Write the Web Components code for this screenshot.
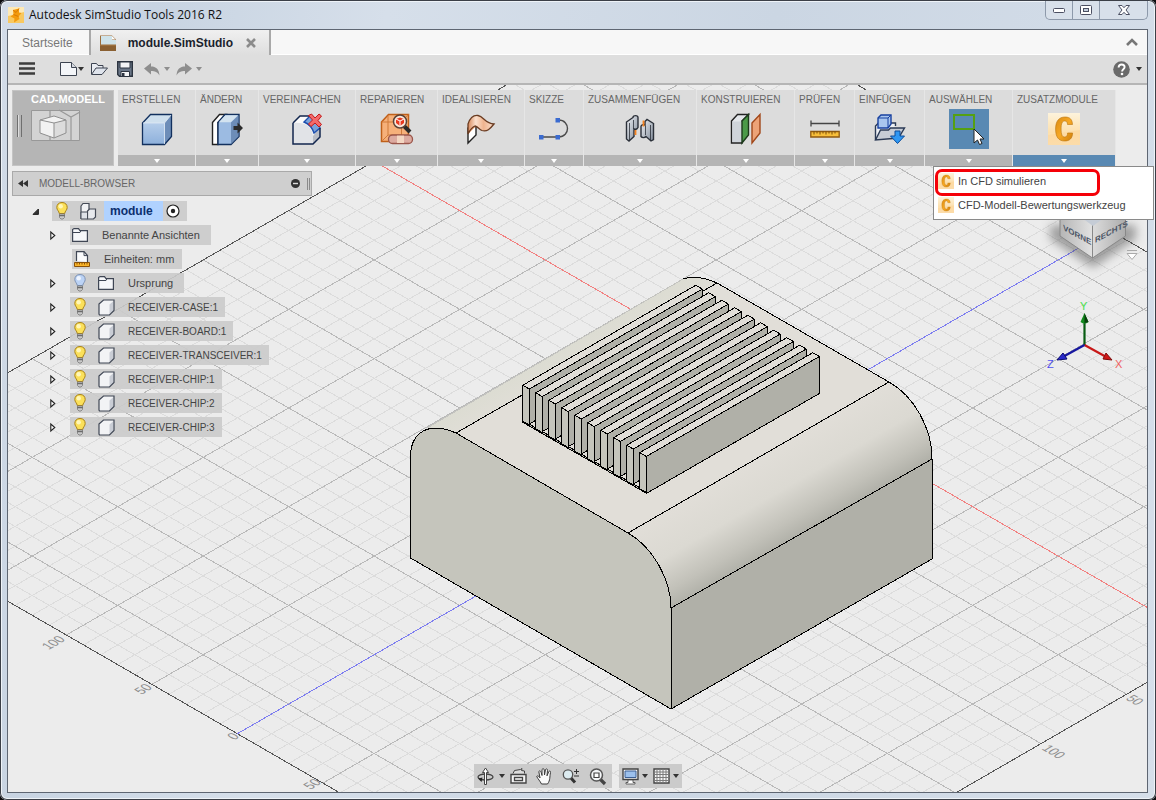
<!DOCTYPE html>
<html lang="de">
<head>
<meta charset="utf-8">
<title>Autodesk SimStudio Tools 2016 R2</title>
<style>
  html, body { margin: 0; background: #0b0b0d; }
  body { font: 11px/14px "Liberation Sans", Arial, sans-serif; color: #444; }
</style>
</head>
<body>
<app-window></app-window>
<script>
const cGlyph = `<defs><linearGradient id="bg" x2="0" y2="1"><stop offset="0" stop-color="#fdf3dc"/><stop offset=".6" stop-color="#fde0ad"/><stop offset="1" stop-color="#fbe6c2"/></linearGradient><linearGradient id="c" x2="1" y2="1"><stop offset="0" stop-color="#d98a12"/><stop offset=".5" stop-color="#f7a823"/><stop offset="1" stop-color="#d07f0c"/></linearGradient></defs><path d="M0 0h32v32H0z" fill="url(#bg)"/><path d="M0 22l32-5v15H0z" fill="#fdd59a" opacity=".6"/><path d="M24.500 11.500h-5c0-2.500-1-3.500-2.800-3.500-2.500 0-3.600 2.500-3.600 8s1 8 3.500 8c2 0 3-1.200 3-4h5c-.2 5.500-3 8-8 8-6 0-9-4-9-12S11 4 17 4c5 0 7.300 2.500 7.500 7.500z" fill="url(#c)" stroke="#b8740f" stroke-width=".6"/>`;
const bulb = (a, b, s) => `<path d="M10 1.500c3.400 0 5.200 2.200 5.200 5 0 2.500-2.200 3.600-2.500 6h-5.400C7 10.100 4.800 9 4.800 6.500 4.800 3.700 6.600 1.500 10 1.500z" fill="${a}" stroke="${s}"/><circle cx="8.700" cy="5.200" r="2.200" fill="${b}"/><path d="M7.500 13h5v3.500l-1.500 1.500h-2l-1.500-1.500z" fill="#c9c9c9" stroke="#777" stroke-width=".8"/><path d="M7.500 14.700h5" stroke="#555"/>`;

/* name: [width, height, markup] */
const ICONS = {
  app: [16, 16, `<rect width="16" height="16" fill="#fde9b6"/><path d="M0 9l16-4v11H0z" fill="#f8c860"/><path d="M5 3l6-1.500v4l2.500.5-3 3.500 1 2.500L6 15.500l.5-4-4-2 3-2z" fill="#f39a0c"/><path d="M5 3l3 2.500 3-4M5.500 7.500l5 2" stroke="#d97a06" fill="none"/>`],
  doc: [16, 16, `<path d="M0 .5h12l4 4V16H0z" fill="#9d6f3d"/><path d="M0 11h16v5H0z" fill="#8a6032"/><path d="M1 1h11v4h4v4.500H1z" fill="#cfe3ea"/><path d="M12 1v3.500h3.500z" fill="#fff"/>`],
  close: [12, 12, `<path d="M2 2l8 8M10 2l-8 8" stroke="#8b8b8b" stroke-width="2.600"/>`],
  chevron: [14, 10, `<path d="M2 8l5-5 5 5" fill="none" stroke="#777" stroke-width="2.600"/>`],
  burger: [18, 16, `<path d="M1 2.500h16M1 7.500h16M1 12.500h16" stroke="#3d3d3d" stroke-width="2.600"/>`],
  new: [17, 14, `<path d="M.5.500h11l5 5V13.500H.5z" fill="#f3f5f8" stroke="#3c4350"/><path d="M11.500.500v5h5" fill="#d5d9e0" stroke="#3c4350"/>`],
  open: [17, 14, `<path d="M.5 12V1.500h5l1.500 2h5V6" fill="#e9ecf1" stroke="#3c4350"/><path d="M.5 12.500L5 6h11.500l-5.500 6.500z" fill="#dfe4ec" stroke="#3c4350"/>`],
  save: [16, 16, `<path d="M.7.700H15.300V15.300H2.500L.7 13.500z" fill="#6b7788" stroke="#2c3440" stroke-width="1.400"/><path d="M3 1h10v6H3z" fill="#f3f4f6" stroke="#2c3440"/><path d="M4 10.500h8.500v5H4z" fill="#f3f4f6" stroke="#2c3440"/><path d="M5 12h2.500v3H5z" fill="#2c3440"/>`],
  undo: [16, 13, `<path d="M7 0v3.500c5 0 8 2.500 8.500 9C13.500 9 11 8 7 8v3.500L0 5.500z" fill="#8e8e8e"/>`],
  redo: [16, 13, `<path d="M9 0v3.500c-5 0-8 2.500-8.500 9C2.500 9 5 8 9 8v3.500l7-6z" fill="#8e8e8e"/>`],
  down: [6, 4, `<path d="M0 0h6L3 4z" fill="currentColor"/>`],
  help: [17, 17, `<circle cx="8.500" cy="8.500" r="8.300" fill="#6a6a6a"/><path d="M5.600 6.500c0-2 1.200-3 3-3s3 1 3 2.600c0 2.200-2.500 2.100-2.500 4.300" fill="none" stroke="#fff" stroke-width="1.900"/><circle cx="9" cy="13" r="1.300" fill="#fff"/>`],
  min: [12, 5, `<rect x=".5" y=".5" width="11" height="4" rx="1" fill="#fff" stroke="#4b4f62"/>`],
  max: [12, 10, `<rect x=".5" y=".5" width="11" height="9" rx="1" fill="#fff" stroke="#4b4f62"/><rect x="3.500" y="3.500" width="5" height="3" fill="#c4cfdd" stroke="#4b4f62"/>`],
  x: [12, 10, `<path d="M.5.500h3.500L6 2.700 8 .5h3.500L8 5l3.500 4.500H8L6 7.300 4 9.500H.5L4 5z" fill="#fff" stroke="#4b4f62"/>`],
  cad: [50, 32, `<path d="M.5.500h48v30H.5z" fill="#d3d3d3" stroke="#989898"/><path d="M19 0v7M19 26v5M40 7v23M28 0l12 7 9-5" fill="none" stroke="#989898" stroke-width="1.200"/><path d="M9 10l14-4 12 4v13l-12 5-14-5z" fill="#f2f2f2"/><path d="M23 13l12-3v13l-12 5z" fill="#dcdcdc"/><path d="M9 10l14-4 12 4v13l-12 5-14-5zl14 3 12-3M23 13v15" fill="none" stroke="#8f8f8f"/>`],
  box: [32, 32, `<defs><linearGradient id="f" x2="0" y2="1"><stop offset="0" stop-color="#b5cdea"/><stop offset="1" stop-color="#8db0db"/></linearGradient></defs><path d="M1.500 10l8-8.500h21l-7 8.500z" fill="#cfe0ee"/><path d="M23.500 10l7-8.500v22l-7 8z" fill="#6d8db8"/><path d="M1.500 10h22v21.500h-22z" fill="url(#f)"/><path d="M1.500 10l8-8.500h21v22l-7 8h-22z" fill="none" stroke="#12305e" stroke-width="1.300"/><path d="M2 10h21.500v21M23.500 10l6.500-8" fill="none" stroke="#dfeaf5" stroke-width=".8"/>`],
  push: [32, 32, `<path d="M1.500 9.500l7-8H15l-8 8v22H1.500z" fill="#fff" stroke="#222" stroke-width="1.400"/><path d="M7 9.500l7-8h14v22l-8 8H7z" fill="#9cbbe2" stroke="#12305e" stroke-width="1.400"/><path d="M7.800 9.200L14.300 2.200H27L20 9.200z" fill="#d3e3f0"/><path d="M20 9.500l7.300-7v21L20 31z" fill="#6d8db8"/><path d="M22.500 13h4V9.500L32 15l-5.500 5.500V17h-4z" fill="#2b2b2b"/>`],
  fillet: [32, 32, `<path d="M2 10l7-7h14l6 9v9l-8 9H2z" fill="#fafafa"/><path d="M2 10c10-1 19 2 20 13v8H2z" fill="#e1e3e7"/><path d="M22 23l7-9v10l-7 7z" fill="#b9bdc5"/><path d="M13 9l6-6c5 1 9 4 10 12l-6 5C21 14 18 11 13 9z" fill="#7aa2da" stroke="#1d4fae" stroke-width="1.400"/><path d="M2 10l7-7h11M29 15v9l-7 7H2V10" fill="none" stroke="#12264e" stroke-width="1.500"/><path d="M17.500 2.500l3-1.500 3.500 4 4-4 2.500 2-3.500 4.500 3.500 4-2.500 2.500-4-4-4 3.500-2.500-2.500 4-4z" fill="#f46a6a" stroke="#c41b1b"/>`],
  repair: [34, 32, `<path d="M1.500 9l7-7.500h20v19l-4 8h-23z" fill="#f6b07a" stroke="#c0601a" stroke-width="1.500"/><path d="M1.500 9h20v20M21.500 9l7-7.500M8 3v19l-6 6M8 22h14" fill="none" stroke="#d07a3a"/><rect x="8.500" y="22" width="24" height="8.500" rx="4" fill="#dcaaa0" stroke="#9a564a" stroke-width="1.300"/><path d="M17 22.600h7v7.400h-7z" fill="#f3d6c2"/><path d="M24 13l6 6" stroke="#2a2a2a" stroke-width="4"/><circle cx="20" cy="8.500" r="6.500" fill="#fbe9dc" stroke="#5a4338" stroke-width="1.500"/><path d="M16 6l4-1.500L24 6v4l-4 3-4-3z" fill="#e8391f"/><path d="M16 6l4 2 4-2M20 8v5" stroke="#fff" fill="none"/>`],
  flag: [30, 30, `<defs><linearGradient id="g"><stop offset="0" stop-color="#d98a5c"/><stop offset=".3" stop-color="#fbe0cd"/><stop offset=".6" stop-color="#efb48f"/><stop offset="1" stop-color="#fbe3d3"/></linearGradient></defs><path d="M2 14v15l8-8v-9z" fill="#fff" stroke="#222" stroke-width="1.400"/><path d="M2 9v11l8-8V6z" fill="#e08a52"/><path d="M2 20V10C4 4 8 1 12 1.500c6 1 7 8 16 8.500-4 5-7 8-12 6.500-3-1-4-4-7-4.500-3 1-5 4-7 8z" fill="url(#g)" stroke="#6a3c22" stroke-width="1.300"/>`],
  sketch: [32, 24, `<path d="M4 20h16M18.500 3h2c12 0 12 17 0 17" fill="none" stroke="#4b4b4b" stroke-width="1.400"/><path d="M1 18h4.500v4.500H1zM17.500 18H22v4.500h-4.500zM17.500 1H22v4.500h-4.500z" fill="#3a6bd0"/>`],
  hinge: [30, 30, `<defs><linearGradient id="h" x2="1" y2="1"><stop offset="0" stop-color="#f1f3f6"/><stop offset="1" stop-color="#7f8a99"/></linearGradient></defs><path d="M1.500 8L8 3.500c0-2.500 5-2.500 5 0v10c-1 2-3 2-4 1.500v7.500L4 27l-2.500-2z" fill="url(#h)" stroke="#2b3039" stroke-width="1.400"/><path d="M4.500 9v17M8.500 6v9" stroke="#2b3039" stroke-width=".8"/><path d="M28.500 9.500L22 5.500l-2 2V11c-2-1-4 0-4 1.500v10c1 1.500 4 1.500 5 0l5 4.500 2.500-1.500z" fill="url(#h)" stroke="#2b3039" stroke-width="1.400"/><path d="M25.500 11v15M20.500 12v9" stroke="#2b3039" stroke-width=".8"/><path d="M10.500 16v5M18.500 6.500v6" stroke="#f5821f" stroke-width="1.800"/>`],
  planes: [32, 32, `<path d="M1.500 8l6-6.500h11L12 8v22H1.500z" fill="#e3e6ea" stroke="#222" stroke-width="1.400"/><path d="M2.500 8.500H12V29H2.500z" fill="#cfd4da"/><path d="M12 8l6.500-6.500V22L12 30z" fill="#4b9a48" stroke="#1d3a1b" stroke-width="1.400"/><path d="M22 10l8-8.500V20l-8 10z" fill="#eda377" stroke="#a2481a" stroke-width="1.400"/>`],
  ruler: [30, 18, `<path d="M1 3.500h28M1 .5v6M29 .5v6" stroke="#444" stroke-width="1.300"/><path d="M.8 11.500h28.400v5.500H.8z" fill="#f8bf3a" stroke="#8f5a10" stroke-width="1.300"/><path d="M4 11.500v3M7 11.500v2M10 11.500v3M13 11.500v2M16 11.500v3M19 11.500v2M22 11.500v3M25 11.500v2" stroke="#7a4c08"/>`],
  insert: [32, 30, `<path d="M1.500 26V12l3-3h17v3" fill="#eef1f5" stroke="#2b3a55" stroke-width="1.400"/><path d="M1.500 26l5-10h8l2-2h14l-6 10-23 2z" fill="#c6ccd6" stroke="#2b3a55" stroke-width="1.400"/><path d="M4 4l3-3h10v9l-3 4H4z" fill="#a9c6ee" stroke="#1740a0" stroke-width="1.400"/><path d="M4 4h10v10M14 4l3-3" fill="none" stroke="#1740a0"/><path d="M21 17h5v5h4.500l-7 7.500-7-7.500H21z" fill="#2f97f2" stroke="#0d4d9a"/>`],
  select: [32, 32, `<path d="M1 2h20v14H1z" fill="none" stroke="#55a012" stroke-width="2"/><path d="M21 16v14l3.500-3 2 4.500 2.500-1-2-4.500h4z" fill="#fff" stroke="#222"/>`],
  cfd: [32, 32, cGlyph],
  rewind: [10, 7, `<path d="M5 0v7L0 3.500zM10 0v7L5 3.500z" fill="#333"/>`],
  minus: [9, 9, `<circle cx="4.500" cy="4.500" r="4.500" fill="#333"/><path d="M2 4.500h5" stroke="#ddd" stroke-width="1.400"/>`],
  grip: [3, 12, `<path d="M.5 0v12M2.500 0v12" stroke="#8a8a8a"/>`],
  handle: [5, 22, `<path d="M.5 0v22M4.500 0v22" stroke="#6f6f6f"/><path d="M1.500 0v22" stroke="#ddd"/>`],
  bulbOn: [20, 20, bulb("#fbe05a", "#fff6b8", "#a98216")],
  bulbOff: [20, 20, bulb("#bcd3f5", "#eef5ff", "#7e93b5")],
  assembly: [20, 18, `<path d="M3 4l2-2.500h6v9l-1.500 6H3z" fill="#f1f2f4" stroke="#454b57" stroke-width="1.200"/><path d="M9.500 9l2-2h6v8l-2 2h-6z" fill="#e7e9ed" stroke="#454b57" stroke-width="1.200"/><path d="M3 10h6.500v7H3z" fill="#dfe2e8" stroke="#454b57"/>`],
  folder: [16, 14, `<path d="M.6 13.400V1.600L2 .6h4.500l1.500 2h7.400v10.800z" fill="#f6f7f9" stroke="#3f4654" stroke-width="1.200"/><path d="M1 4.500h7L9 2.600" fill="none" stroke="#3f4654"/>`],
  units: [16, 17, `<path d="M2.500 10V.6h7.500l3.500 4V11" fill="#fafbfc" stroke="#3f4654" stroke-width="1.200"/><path d="M10 .6v4h3.500" fill="none" stroke="#3f4654"/><path d="M.5 11.500h15v4H.5z" fill="#f9b52a" stroke="#8a5208"/><path d="M3 11.500v2M5.500 11.500v2M8 11.500v2M10.500 11.500v2M13 11.500v2" stroke="#8a5208"/>`],
  part: [17, 17, `<path d="M1 5l4.500-4h10.500v10.500L11.500 16H1.500L1 15z" fill="#f2f3f5"/><path d="M11.500 5.500l4-3.500v9l-4 4z" fill="#c9cdd5"/><path d="M1 5l4.500-4h10.500v10.500L11.500 16H1.500L1 15z" fill="none" stroke="#3f4654" stroke-width="1.200"/>`],
  target: [14, 14, `<circle cx="7" cy="7" r="6" fill="#fff" stroke="#222" stroke-width="1.200"/><circle cx="7" cy="7" r="2.200" fill="#222"/>`],
  shut: [6, 9, `<path d="M.8 1v7l4-3.500z" fill="#fff" stroke="#222" stroke-width="1.100"/>`],
  expanded: [7, 7, `<path d="M6.400 1v5.400H1z" fill="#333" stroke="#222"/>`],
  orbit: [17, 17, `<ellipse cx="8.500" cy="9" rx="7.500" ry="3" fill="none" stroke="#444" stroke-width="1.300"/><path d="M8.500 0l3 4.500h-2v12h-2v-12h-2z" fill="#fff" stroke="#444"/><path d="M5.500 9.500L1 10.500l3.500 3.500z" fill="#222"/>`],
  look: [17, 16, `<path d="M3 5.500l1.500-3 6-1 1.500-1-.5 2 3 .5v2.500" fill="#ddd" stroke="#444"/><path d="M1 6.500h15V15H1z" fill="#f5f5f5" stroke="#444" stroke-width="1.400"/><path d="M4.500 9.500h8v3h-8z" fill="#fff" stroke="#444" stroke-width="1.300"/>`],
  hand: [17, 17, `<path d="M5.500 16C4 13 2 11 .7 8.500c.8-1.500 2.500 0 3.300 1.500L2.800 3.500c1-1.300 2-.3 2.400 1L6 7.500V1.500C7 .3 8 .6 8.300 2l.2 5 1-5.500c1-1.200 2-.5 2 .8L11 7.800l1.800-4.300c1-1 2-.3 1.700 1C13.500 9 14.500 12 11.500 16z" fill="#fafafa" stroke="#3c3c3c"/>`],
  zoom: [18, 17, `<path d="M8.500 9.500l4.500 5" stroke="#333" stroke-width="3"/><circle cx="6" cy="6.500" r="4.700" fill="#dcebf0" stroke="#555" stroke-width="1.300"/><path d="M12 3.500h5M14.500 1v5M12 8h5" stroke="#333"/>`],
  fit: [18, 17, `<path d="M10.500 10.500l5.500 5.500" stroke="#444" stroke-width="3.200"/><circle cx="7.500" cy="7" r="6" fill="#f4f6f8" stroke="#555" stroke-width="1.500"/><path d="M5 5h5v4.500H5z" fill="#fff" stroke="#444" stroke-width="1.200"/>`],
  display: [17, 16, `<path d="M1 1h15v10.500H1z" fill="#f5f5f5" stroke="#444" stroke-width="1.400"/><path d="M3 3h11v6.500H3z" fill="#9cc0ec" stroke="#3d5f92"/><path d="M6 12h5v2.500h2V16H4v-1.500h2z" fill="#fff" stroke="#444" stroke-width=".8"/>`],
  grid: [17, 16, `<path d="M1 1h15v14H1z" fill="#f6f6f6" stroke="#444" stroke-width="1.400"/><path d="M4 1v14M7 1v14M10 1v14M13 1v14M1 4h15M1 6.500h15M1 9.500h15M1 12.500h15" stroke="#7b7b7b"/>`]
};

class Base extends HTMLElement {
  constructor() { super(); this.attachShadow({ mode: "open" }); }
  connectedCallback() { this.shadowRoot.innerHTML = `<style>*{box-sizing:border-box}button{font:inherit;color:inherit;background:none;border:0;padding:0;margin:0;display:flex;align-items:center;justify-content:center}${this.css()}</style>${this.html()}`; }
}
const define = (name, css, html) => customElements.define(name, class extends Base {
  css() { return css; }
  html() { return typeof html === "function" ? html(this) : html; }
});
const btn = (icon, label, cls = "") => `<button class="${cls}" aria-label="${label}"><ui-icon name="${icon}"></ui-icon></button>`;

define("ui-icon", `:host{display:inline-flex;flex:none}svg{display:block;overflow:visible}`, el => {
  const [w, h, body] = ICONS[el.getAttribute("name")];
  const size = +el.getAttribute("size") || w;
  return `<svg width="${size}" height="${Math.round(h * size / w)}" viewBox="0 0 ${w} ${h}" aria-hidden="true">${body}</svg>`;
});

define("title-bar", `
  :host{display:flex;align-items:flex-start;height:28px;color:#111}
  .t{display:flex;align-items:center;gap:5px;height:28px;flex:1;padding-left:1px;font:12px/16px "Open Sans","Noto Sans",sans-serif}
  .c{display:flex;height:19px;border:1px solid #8d99aa;border-top:0;border-radius:0 0 5px 5px;background:#d8e0ea}
  .c button{width:27px;border-right:1px solid #8d99aa}
  .c button:last-child{width:47px;border:0}`,
  `<div class="t"><ui-icon name="app"></ui-icon><span>Autodesk SimStudio Tools 2016 R2</span></div>
   <div class="c">${btn("min", "Minimieren")}${btn("max", "Maximieren")}${btn("x", "Schließen")}</div>`);

define("tab-bar", `
  :host{display:flex;height:25px;background:#f7f7f7;font-size:12px;border-bottom:1px solid #fff}
  button{height:24px}
  .s{padding:2px 16px 0 14px;color:#777}
  .a{display:flex;align-items:center;border:solid #a9a9a9;border-width:0 2px;background:linear-gradient(#f0f0f0,#dedede);height:25px;padding:0 12px 0 9px;color:#1b1f2d;font-weight:bold}
  .a span{margin:0 12px 0 12px}
  .e{margin-left:auto;padding-right:8px}`,
  `<button class="s">Startseite</button>
   <div class="a"><ui-icon name="doc"></ui-icon><span>module.SimStudio</span>${btn("close", "Tab schließen")}</div>
   ${btn("chevron", "Einklappen", "e")}`);

define("quick-toolbar", `
  :host{display:flex;align-items:center;height:30px;padding:0 5px 0 10px;background:#dedede;border-bottom:2px solid #b5b5b5;color:#333}
  .m{margin-right:24px}.n{margin-right:1px}.o{margin:0 9px 0 7px}.u{margin:0 4px 0 11px}.r{margin:0 4px 0 6px}.g{color:#8e8e8e}
  .h{margin:0 6px 0 auto}`,
  `${btn("burger", "Menü", "m")}${btn("new", "Neu", "n")}${btn("down", "Neu Optionen")}${btn("open", "Öffnen", "o")}${btn("save", "Speichern")}
   ${btn("undo", "Rückgängig", "u")}${btn("down", "Rückgängig Optionen", "g")}${btn("redo", "Wiederholen", "r")}${btn("down", "Wiederholen Optionen", "g")}
   ${btn("help", "Hilfe", "h")}${btn("down", "Hilfe Optionen")}`);

define("ribbon-group", `
  :host{display:flex;flex-direction:column;position:relative;height:76px;background:#dcdcdc;border:solid #e6e6e6;border-width:0 1px 0 0;font-size:10px;color:#666}
  .l{height:19px;line-height:19px;padding-left:4px;white-space:nowrap}
  .i{align-self:center;width:40px;height:40px;margin-bottom:6px}
  :host([active]) .i{background:#5989b3}
  .d{height:11px;background:#b5b5b5;color:#fff}
  :host([open]) .d{background:#5989b3}`,
  el => `<span class="l">${el.getAttribute("label")}</span>${btn(el.getAttribute("icon"), el.getAttribute("label"), "i")}${btn("down", el.getAttribute("label") + " Optionen", "d")}<slot></slot>`);

define("workspace-switch", `
  :host{display:block;width:102px;height:76px;margin-right:4px;background:#b5b5b5;border:1px solid #c4c4c4}
  button{width:100%;height:74px;justify-content:flex-start;align-items:flex-start;padding-left:4px}
  .g{align-self:center;margin-bottom:4px}
  .b{display:grid;padding-left:9px;font-weight:bold;color:#fff;text-align:left;line-height:16px;gap:3px}`,
  `<button><ui-icon class="g" name="handle"></ui-icon><span class="b">CAD-MODELL<ui-icon name="cad"></ui-icon></span></button>`);

define("drop-menu", `
  :host{position:absolute;top:100%;right:-39px;width:221px;padding:2px;background:#fff;border:1px solid #8a8a8a;font-size:11px;color:#444;z-index:5}
  button{justify-content:flex-start;width:100%;height:24px;gap:4px;padding-left:2px;white-space:nowrap}
  .wrap{position:relative}
  .mark{position:absolute;top:0;left:-1px;width:165px;height:27px;border:3px solid #f50008;border-radius:7px;pointer-events:none}`,
  `<div class="wrap"><button><ui-icon name="cfd" size="16"></ui-icon>In CFD simulieren</button><button><ui-icon name="cfd" size="16"></ui-icon>CFD-Modell-Bewertungswerkzeug</button><div class="mark"></div></div>`);

define("ribbon-bar", `:host{display:flex;position:relative;z-index:3}`, () => {
  const groups = [["ERSTELLEN", "box", 78], ["ÄNDERN", "push", 63], ["VEREINFACHEN", "fillet", 97], ["REPARIEREN", "repair", 82], ["IDEALISIEREN", "flag", 87], ["SKIZZE", "sketch", 59], ["ZUSAMMENFÜGEN", "hinge", 113], ["KONSTRUIEREN", "planes", 98], ["PRÜFEN", "ruler", 60], ["EINFÜGEN", "insert", 70], ["AUSWÄHLEN", "select", 88, "active"], ["ZUSATZMODULE", "cfd", 103, "open"]];
  return `<workspace-switch></workspace-switch>` + groups.map(([l, i, w, s = ""]) =>
    `<ribbon-group label="${l}" icon="${i}" ${s} style="width:${w}px">${s === "open" ? "<drop-menu></drop-menu>" : ""}</ribbon-group>`).join("");
});

define("tree-node", `
  :host{display:flex;height:20px;margin-bottom:4px;padding-left:38px;color:#444}
  :host([root]){padding-left:20px}
  :host([flat]){padding-left:40px}
  .a{width:20px;justify-content:flex-start}
  .p{display:flex;background:rgba(203,203,203,.92);gap:6px}
  .c{display:flex;width:20px;align-items:center;justify-content:center}
  .n{line-height:20px;padding:0 11px 0 6px;white-space:nowrap}
  :host([flat]) .n{padding-right:8px}
  :host([caps]) .n{font-size:10px;line-height:21px;padding-right:7px}
  :host([root]) .n{background:#b0d2ff;color:#0b2f6e;font-weight:bold;font-size:12px;padding-right:10px}
  .t{width:20px;margin:0 4px 0 -6px}`,
  el => {
    const b = el.getAttribute("bulb"), root = el.hasAttribute("root");
    return `${el.hasAttribute("flat") ? `<span class="a"></span>` : btn(root ? "expanded" : "shut", "Umschalten", "a")}
      <div class="p">${b ? btn(b, "Sichtbarkeit", "c") : ""}<span class="c"><ui-icon name="${el.getAttribute("icon")}"></ui-icon></span><span class="n"><slot></slot></span>${root ? btn("target", "Aktivieren", "t") : ""}</div>`;
  });

define("model-browser", `
  :host{display:block;width:300px;margin-top:5px;position:relative}
  header{display:flex;align-items:center;height:25px;margin-bottom:5px;padding:0 1px 0 5px;background:#cfcfcf;border:1px solid #a9a9a9;font-size:10px;color:#666}
  header span{flex:1;margin-left:11px}
  .m{margin-right:7px}`,
  `<header>${btn("rewind", "Einklappen")}<span>MODELL-BROWSER</span>${btn("minus", "Minimieren", "m")}<ui-icon name="grip"></ui-icon></header>
   <tree-node root icon="assembly" bulb="bulbOn">module</tree-node>
   <tree-node icon="folder">Benannte Ansichten</tree-node>
   <tree-node flat icon="units">Einheiten: mm</tree-node>
   <tree-node icon="folder" bulb="bulbOff">Ursprung</tree-node>` +
   ["CASE:1", "BOARD:1", "TRANSCEIVER:1", "CHIP:1", "CHIP:2", "CHIP:3"].map(n => `<tree-node caps icon="part" bulb="bulbOn">RECEIVER-${n}</tree-node>`).join(""));

define("nav-bar", `
  :host{display:flex;justify-content:center;gap:7px;margin-top:auto;position:relative;color:#333}
  div{display:flex;align-items:center;height:24px;background:#cbcbcb;padding:0 3px}
  .g{gap:9px;padding-right:5px}
  .h{gap:3px}
  .s{margin-left:2px}
  .k{margin-left:-4px}`,
  `<div class="g">${btn("orbit", "Orbit")}${btn("down", "Orbit Optionen", "k")}${btn("look", "Ansehen", "k")}${btn("hand", "Pan")}${btn("zoom", "Zoom")}${btn("fit", "Einpassen")}</div>
   <div class="h">${btn("display", "Anzeige")}${btn("down", "Anzeige Optionen")}${btn("grid", "Raster", "s")}${btn("down", "Raster Optionen")}</div>`);

/* Isometric scene: ground grid, housing with heat sink, view cube and axis triad. */
function scene() {
  const cx = 801.7, cy = 408, ux = 17.1, uy = 9.87;
  const pt = (a, b) => [(cx + (a + b) * ux).toFixed(1), (cy + (a - b) * uy).toFixed(1)];
  const A = [-25, 24], B = [-33, 18];
  let minor = "", major = "";
  const seg = (p, q) => `M${p}L${q}`;
  for (let a = A[0]; a <= A[1]; a++) { const s = seg(pt(a, B[0]), pt(a, B[1])); a % 5 ? minor += s : major += s; }
  for (let b = B[0]; b <= B[1]; b++) { const s = seg(pt(A[0], b), pt(A[1], b)); b % 5 ? minor += s : major += s; }
  const edge = `M${pt(A[0], B[0])}L${pt(A[1], B[0])}L${pt(A[1], B[1])}L${pt(A[0], B[1])}Z`;
  const poly = (pts, f) => `<polygon points="${pts.map(p => p.map(v => v.toFixed(1)).join()).join(" ")}" fill="${f}"/>`;
  const dx = 173, dy = -100, w = 6.6, h = 3.8, H = 37, lip = 2;
  let fins = poly([[522.7, 420], [646, 491], [646, 493], [522.7, 422.3]], "#c5c5bc");
  for (let i = 0; i < 10; i++) {
    const x = 522.7 + i * 13, y = 385.3 + i * 7.49, r = [x + w, y + h], b = i < 9 ? H - lip : H;
    if (i < 9) fins += poly([[r[0], r[1] + b], [r[0] + 6.4, r[1] + b - 3.7], [r[0] + 6.4, r[1] + b + 3.7]], "#e1ded8");
    fins += poly([r, [r[0] + dx, r[1] + dy], [r[0] + dx, r[1] + dy + b], [r[0], r[1] + b]], "#b0b0a8");
    fins += poly([[x, y], [x + dx, y + dy], [r[0] + dx, r[1] + dy], r], "#e1ded8");
    fins += poly([[x, y], r, [r[0], r[1] + H - 1], [x, y + H - 1]], "#c5c5bc");
  }
  const label = (x, y, s, t) => `<text transform="translate(${x} ${y}) rotate(${30 * s}) skewX(${-30 * s})" text-anchor="${s < 0 ? "end" : "start"}">${t}</text>`;
  return `<defs>
    <linearGradient id="fil" gradientUnits="userSpaceOnUse" x1="758" y1="458" x2="802" y2="534"><stop offset="0" stop-color="#e1ded8"/><stop offset=".45" stop-color="#dbd9d2"/><stop offset=".8" stop-color="#c2c1b9"/><stop offset="1" stop-color="#b0b0a8"/></linearGradient>
    <linearGradient id="lf" gradientUnits="userSpaceOnUse" x1="560" y1="350" x2="575" y2="376"><stop offset="0" stop-color="#dcdcd2"/><stop offset="1" stop-color="#e1ded8"/></linearGradient>
    <linearGradient id="cl"><stop offset="0" stop-color="#b5b5b5"/><stop offset="1" stop-color="#e2e2e2"/></linearGradient>
    <linearGradient id="cr"><stop offset="0" stop-color="#dcdcdc"/><stop offset="1" stop-color="#acacac"/></linearGradient>
    <filter id="soft" x="-50%" y="-50%" width="200%" height="200%"><feGaussianBlur stdDeviation="5"/></filter></defs>
  <g fill="none" shape-rendering="crispEdges"><path d="${minor}" stroke="#dcdcdc"/><path d="${major}" stroke="#b9b9b9"/><path d="${edge}" stroke="#555"/>
  <path d="${seg(pt(A[0], 0), pt(A[1], 0))}" stroke="#f28080"/><path d="${seg(pt(0, B[0]), pt(0, B[1]))}" stroke="#7d7df0"/></g>
  <g font-size="12" fill="#8e8e8e">${label(66, 640, -1, "100")}${label(153, 688, -1, "50")}${label(240, 737, -1, "0")}${label(322, 783, -1, "50")}${label(1125, 699, 1, "50")}${label(1041, 749, 1, "100")}</g>
  <path d="M427 428L683 279Q697 274 717 283L456 433z" fill="url(#lf)"/>
  <g shape-rendering="crispEdges"><path d="M427 428L683 279" stroke="#c4c4c0" fill="none"/></g>
  <g stroke="#000" stroke-linejoin="round" shape-rendering="crispEdges">
    <path d="M456 433L717 283L889 382L628 533z" fill="#e1ded8"/>
    <path d="M628 533L889 382C914 396 932 428 932 459L671 608C671 580 653 547 628 533z" fill="url(#fil)"/>
    <path d="M671 608L932 459V559L671 709z" fill="#b0b0a8"/>
    <path d="M410.500 558V456C411 432 429 421 456 433L628 533C653 547 671 580 671 608V709z" fill="#c5c5bc"/>
    <path d="M683 279Q697 274 717 283" fill="none"/>
    ${fins}
  </g>
  <path d="M1050 225h86v14l-43 29-43-29z" fill="#555" opacity=".5" filter="url(#soft)"/>
  <path d="M1060 202v34l32.500 22v-44z" fill="url(#cl)" stroke="#888"/><path d="M1125.500 202v34l-33 22v-44z" fill="url(#cr)" stroke="#888"/>
  <path d="M1060 202l33-14 33 14-33 24z" fill="#c5ccd6"/>
  <g font-size="8" font-weight="bold" fill="#4a5464"><text transform="translate(1063 230) skewY(28)">VORNE</text><text transform="translate(1095 243) skewY(-28)">RECHTS</text></g>
  <path d="M1127 250.500h10M1127 253.500h10l-5 6z" fill="#fff" stroke="#aaa"/>
  <g stroke-width="2.200"><path d="M1084.500 345v-28" stroke="#075c12"/><path d="M1084.500 345l20 11" stroke="#c81818"/><path d="M1084.500 345l-20 11" stroke="#1717a0"/></g>
  <path d="M1084.500 313l4 9q-4 3-8 0z" fill="#128a1d"/><path d="M1084.500 313v10l4-1z" fill="#073f0c"/><path d="M1112 360l-6-7-3 6z" fill="#d01818" stroke="#7a0b0b"/><path d="M1057 360l6-7 4 6z" fill="#2a2acc" stroke="#0b0b6e"/>
  <g font-size="11"><text x="1080" y="310" fill="#4ae04a">Y</text><text x="1115" y="368" fill="#f06060">X</text><text x="1047" y="368" fill="#5050f0">Z</text></g>`;
}
define("model-viewport", `
  :host{display:flex;flex-direction:column;flex:1;position:relative;background:#ececec;padding:5px 4px 4px}
  svg{position:absolute;inset:0;width:100%;height:100%}`,
  () => `<svg viewBox="8 85 1139 707" preserveAspectRatio="xMidYMid slice" role="img" aria-label="3D-Modell">${scene()}</svg><ribbon-bar></ribbon-bar><model-browser></model-browser><nav-bar></nav-bar>`);

define("app-window", `
  :host{display:flex;flex-direction:column;min-height:100vh;box-sizing:border-box;padding:0 8px 7px 7px;border-radius:7px;box-shadow:inset 0 0 0 1px #3b3f47,inset 0 0 0 2px #eef3f8;background:linear-gradient(100deg,#d3dce8,#c8d4e2 12%,#d6dfea 30%,#cbd6e3 60%,#d6dfea)}
  main{display:flex;flex-direction:column;flex:1;border:1px solid #5e6672}
  title-bar{margin-top:1px}`,
  `<title-bar></title-bar><main><tab-bar></tab-bar><quick-toolbar></quick-toolbar>
   <model-viewport></model-viewport></main>`);
</script>
</body>
</html>
